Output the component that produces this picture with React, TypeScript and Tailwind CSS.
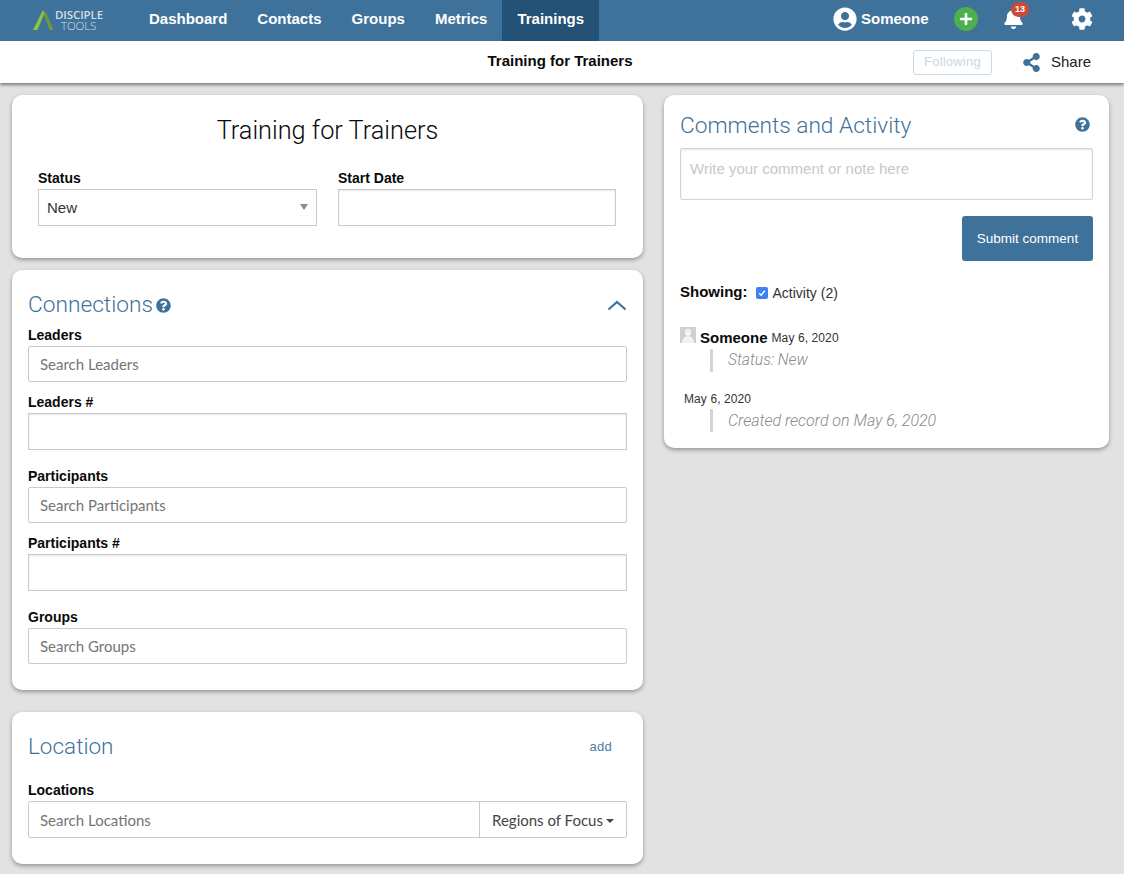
import React from "react";
import { FaCog, FaBell, FaPlus, FaQuestionCircle, FaUserCircle, FaShareAlt } from "react-icons/fa";

const sans = "font-['Liberation_Sans',Arial,sans-serif]";
const light = "font-['Roboto',sans-serif] font-light";

function Label({ children }: { children: React.ReactNode }) {
  return <div className="text-[14px] leading-[18px] font-bold text-[#0a0a0a]">{children}</div>;
}

function Search({ text, className = "" }: { text: string; className?: string }) {
  return (
    <div className={`h-[36px] border border-[#cacaca] rounded-[2px] bg-white flex items-center pl-[11px] font-['Lato',sans-serif] text-[15px] text-[#757575] ${className}`}>
      {text}
    </div>
  );
}

function Blank({ className = "" }: { className?: string }) {
  return <div className={`h-[37px] border border-[#cacaca] bg-white shadow-[inset_0_1px_2px_rgba(10,10,10,0.1)] ${className}`} />;
}

function Card({ className = "", children }: { className?: string; children: React.ReactNode }) {
  return <section className={`bg-white rounded-[10px] shadow-[0_2px_4px_rgba(0,0,0,0.35)] ${className}`}>{children}</section>;
}

function Nav({ children, active = false }: { children: React.ReactNode; active?: boolean }) {
  return (
    <div className={`h-full flex items-center px-[15px] pb-[3px] text-[15px] font-bold text-white ${active ? "bg-[#245176]" : ""}`}>
      {children}
    </div>
  );
}

export default function App() {
  return (
    <div className={`${sans} h-[874px] overflow-hidden bg-[#e2e2e2] text-[#0a0a0a]`}>
      <header className="h-[41px] bg-[#3f729b] flex items-center relative">
        <div className="w-[134px] h-full flex items-center pl-[32px] pb-[1px] shrink-0">
          <svg width="22" height="22" viewBox="0 0 22 22">
            <path d="M1 21 L11 1 L12.5 4 L5.5 21 Z" fill="#8cc63f" />
            <path d="M11.5 5 L14 3 L21.5 21 L17.5 21 Z" fill="#6c9a3a" />
          </svg>
          <div className="ml-[1px] flex flex-col font-['Open_Sans',sans-serif] text-[#d5dfe7]">
            <span className="text-[11.5px] leading-[11px] font-semibold tracking-[-0.1px]">DISCIPLE</span>
            <span className="text-[11.5px] leading-[11px] font-light tracking-[-0.1px] ml-[6px]">TOOLS</span>
          </div>
        </div>
        <nav className="h-full flex">
          <Nav>Dashboard</Nav>
          <Nav>Contacts</Nav>
          <Nav>Groups</Nav>
          <Nav>Metrics</Nav>
          <Nav active>Trainings</Nav>
        </nav>
        <div className="ml-auto h-full flex items-center pb-[4px] text-white">
          <FaUserCircle className="text-[24px]" />
          <span className="ml-[3.5px] mt-[2px] text-[15px] font-bold">Someone</span>
          <div className="ml-[25.5px] w-[24px] h-[24px] rounded-full bg-[#4caf50] flex items-center justify-center">
            <FaPlus className="text-[14px]" />
          </div>
          <div className="ml-[24px] relative w-[22px] flex justify-center">
            <FaBell className="text-[21px]" />
            <span className="absolute left-[9px] top-[-6px] h-[15px] w-[18px] rounded-full bg-[#cc4b37] text-[9px] leading-[15px] text-center font-bold">13</span>
          </div>
          <FaCog className="ml-[47px] mr-[31px] text-[22px]" />
        </div>
      </header>

      <div className="h-[42px] bg-white shadow-[0_2px_3px_rgba(0,0,0,0.45)] relative flex items-center">
        <div className="absolute left-0 right-[4px] top-[11px] text-center text-[15px] leading-[18px] font-bold">Training for Trainers</div>
        <div className="ml-auto flex items-center">
          <div className="w-[79px] h-[25px] border border-[#c9d9e6] rounded-[3px] flex items-center justify-center text-[13px] tracking-[0.2px] text-[#c6d6e3]">Following</div>
          <FaShareAlt className="ml-[30px] text-[19px] text-[#3f729b]" />
          <span className="ml-[10px] mr-[33px] text-[15px] text-[#222]">Share</span>
        </div>
      </div>

      <main className="flex items-start pl-[12px] pt-[12px] gap-[21px]">
        <div className="w-[631px] shrink-0 flex flex-col">
          <Card className="h-[163px] px-[26px]">
            <h1 className={`${light} text-center text-[25.3px] leading-[30px] pt-[21px] text-[#0a0a0a]`}>Training for Trainers</h1>
            <div className="flex gap-[21px] mt-[23px]">
              <div className="w-[279px]">
                <Label>Status</Label>
                <div className="mt-[2px] h-[37px] border border-[#cacaca] bg-white flex items-center pl-[8px] pt-[2px] text-[15px] text-[#333] relative">
                  New
                  <span className="absolute right-[8px] top-[14px] w-0 h-0 border-x-[4px] border-x-transparent border-t-[6px] border-t-[#8a8a8a]" />
                </div>
              </div>
              <div className="w-[278px]">
                <Label>Start Date</Label>
                <Blank className="mt-[2px]" />
              </div>
            </div>
          </Card>

          <Card className="mt-[12px] h-[420px] pl-[16px] pr-[16px] pt-[20px]">
            <div className="flex items-center h-[30px]">
              <h2 className={`${light} text-[22.7px] leading-[30px] text-[#3f729b]`}>Connections</h2>
              <FaQuestionCircle className="ml-[3px] text-[15px] text-[#3f729b]" />
              <svg className="ml-auto" width="20" height="11" viewBox="0 0 20 11" fill="none">
                <path d="M1.5 9.5 L10 2 L18.5 9.5" stroke="#3f729b" strokeWidth="2.2" />
              </svg>
            </div>
            <div className="mt-[6px]"><Label>Leaders</Label></div>
            <Search text="Search Leaders" className="mt-[2px]" />
            <div className="mt-[11px]"><Label>Leaders #</Label></div>
            <Blank className="mt-[2px]" />
            <div className="mt-[17px]"><Label>Participants</Label></div>
            <Search text="Search Participants" className="mt-[2px]" />
            <div className="mt-[11px]"><Label>Participants #</Label></div>
            <Blank className="mt-[2px]" />
            <div className="mt-[17px]"><Label>Groups</Label></div>
            <Search text="Search Groups" className="mt-[2px]" />
          </Card>

          <Card className="mt-[22px] h-[152px] pl-[16px] pr-[16px] pt-[19px]">
            <div className="flex items-center h-[30px]">
              <h2 className={`${light} text-[22.5px] leading-[30px] text-[#3f729b]`}>Location</h2>
              <span className="ml-auto mr-[15px] mt-[2px] text-[13px] text-[#4a7ea8] tracking-[0.3px]">add</span>
            </div>
            <div className="mt-[20px]"><Label>Locations</Label></div>
            <div className="mt-[2px] h-[37px] border border-[#cacaca] rounded-[2px] flex pt-[1px] font-['Lato',sans-serif] text-[15px]">
              <div className="flex-1 flex items-center pl-[11px] text-[#757575]">Search Locations</div>
              <div className="w-[147px] -mt-[1px] pt-[1px] border-l border-[#cacaca] flex items-center justify-center text-[#444]">
                Regions of Focus
                <span className="ml-[3px] mt-[2px] w-0 h-0 border-x-[4px] border-x-transparent border-t-[4px] border-t-[#444]" />
              </div>
            </div>
          </Card>
        </div>

        <Card className="w-[445px] shrink-0 h-[353px] px-[16px] pt-[16px]">
          <div className="flex items-center h-[30px]">
            <h2 className={`${light} text-[22.7px] leading-[30px] text-[#3f729b]`}>Comments and Activity</h2>
            <FaQuestionCircle className="ml-auto mr-[3px] -mt-[4px] text-[15px] text-[#3f729b]" />
          </div>
          <div className="mt-[7px] h-[52px] border border-[#d4d4d4] rounded-[2px] shadow-[inset_0_1px_2px_rgba(10,10,10,0.1)] pl-[9px] pt-[11px] text-[15px] leading-[18px] text-[#c8c8c8]">
            Write your comment or note here
          </div>
          <div className="flex justify-end mt-[16px]">
            <div className="w-[131px] h-[45px] pt-[1px] bg-[#3f729b] rounded-[3px] flex items-center justify-center text-[13.5px] text-white">Submit comment</div>
          </div>
          <div className="flex items-center mt-[22px] h-[20px]">
            <span className="text-[15px] font-bold -mt-[2px]">Showing:</span>
            <span className="ml-[8px] w-[12px] h-[12px] rounded-[2px] bg-[#3b82f6] flex items-center justify-center">
              <svg width="8" height="8" viewBox="0 0 8 8" fill="none"><path d="M1.2 4.2 L3.2 6.2 L6.8 1.6" stroke="white" strokeWidth="1.5" /></svg>
            </span>
            <span className="ml-[5px] text-[14px] text-[#333]">Activity (2)</span>
          </div>
          <div className="flex items-end mt-[25px] h-[20px]">
            <div className="w-[16px] h-[16px] bg-[#d0d0d0] relative overflow-hidden mb-[5px]">
              <span className="absolute left-[5px] top-[2px] w-[6px] h-[7px] rounded-full bg-[#f2f2f2]" />
              <span className="absolute left-[2px] top-[9px] w-[12px] h-[8px] rounded-t-full bg-[#f2f2f2]" />
            </div>
            <span className="ml-[4px] text-[15px] leading-[20px] font-bold">Someone</span>
            <span className="ml-[4px] text-[12px] leading-[20px] tracking-[0.1px] text-[#333]">May 6, 2020</span>
          </div>
          <div className={`${light} italic ml-[30px] mt-[1px] h-[23px] border-l-[3px] border-[#d4d4d4] pl-[15px] text-[15.6px] leading-[23px] text-[#8a8a8a]`}>Status: New</div>
          <div className="ml-[4px] mt-[19px] text-[12px] leading-[16px] tracking-[0.1px] text-[#333]">May 6, 2020</div>
          <div className={`${light} italic ml-[30px] mt-[2px] h-[23px] border-l-[3px] border-[#d4d4d4] pl-[15px] text-[16px] leading-[23px] text-[#8a8a8a]`}>Created record on May 6, 2020</div>
        </Card>
      </main>
    </div>
  );
}
